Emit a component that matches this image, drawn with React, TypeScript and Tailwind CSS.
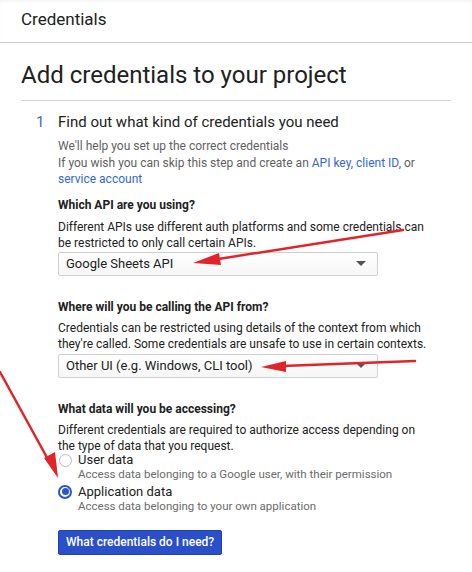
import { useState } from "react";

const Select = ({ value }: { value: string }) => {
  return (
    <div className="flex items-center justify-between w-[320px] h-[24px] px-[7px] border border-[#d0d0d0] rounded-[2px] bg-gradient-to-b from-white to-[#f6f6f6] text-[13px] text-[#212121]">
      <span>{value}</span>
      <svg width="10" height="5" viewBox="0 0 10 5" className="mr-[4px]">
        <path d="M0 0 L10 0 L5 5 Z" fill="#555" />
      </svg>
    </div>
  );
};

const Radio = ({ checked }: { checked: boolean }) => {
  return checked ? (
    <span className="flex items-center justify-center w-[14px] h-[14px] rounded-full border-2 border-[#2a56c6]">
      <span className="block w-[7px] h-[7px] rounded-full bg-[#2a56c6]" />
    </span>
  ) : (
    <span className="block w-[13px] h-[13px] rounded-full border border-[#bdbdbd] bg-white" />
  );
};

const App = () => {
  const [data, setData] = useState("app");

  return (
    <div className="relative w-[472px] h-[572px] bg-white font-['Roboto',sans-serif] text-[#212121] overflow-hidden">
      <div className="h-[43px] border-b border-[#cfcfcf] px-[21px] pt-[7px] text-[17px] shadow-[inset_0_2px_2px_rgba(0,0,0,0.04)]">
        Credentials
      </div>

      <div className="mx-[21px] border-b border-[#d4d4d4] pt-[17px] pb-[10px]">
        <h1 className="text-[24px] leading-[30px]">Add credentials to your project</h1>
      </div>

      <div className="flex pl-[36px] pt-[11px]">
        <span className="w-[22px] text-[15px] leading-[20px] text-[#3b6bd6]">1</span>
        <div className="flex-1">
          <h2 className="text-[15px] leading-[20px]">Find out what kind of credentials you need</h2>

          <p className="mt-[6px] text-[12px] leading-[16.5px] text-[#5f5f5f]">
            We'll help you set up the correct credentials
            <br />
            If you wish you can skip this step and create an{" "}
            <a className="text-[#3367d6]">API key</a>,{" "}
            <a className="text-[#3367d6]">client ID</a>, or
            <br />
            <a className="text-[#3367d6]">service account</a>
          </p>

          <h3 className="mt-[9px] text-[12px] leading-[16px] font-bold">Which API are you using?</h3>
          <p className="mt-[6px] text-[12px] leading-[16px] w-[370px]">
            Different APIs use different auth platforms and some credentials can be restricted to only call certain APIs.
          </p>
          <div className="mt-[1px]">
            <Select value="Google Sheets API" />
          </div>

          <h3 className="mt-[23px] text-[12px] leading-[16px] font-bold">Where will you be calling the API from?</h3>
          <p className="mt-[5px] text-[12px] leading-[16px] w-[375px]">
            Credentials can be restricted using details of the context from which they're called. Some credentials are unsafe to use in certain contexts.
          </p>
          <div className="mt-[2px]">
            <Select value="Other UI (e.g. Windows, CLI tool)" />
          </div>

          <h3 className="mt-[23px] text-[12px] leading-[16px] font-bold">What data will you be accessing?</h3>
          <p className="mt-[5px] text-[12px] leading-[16px] w-[370px]">
            Different credentials are required to authorize access depending on the type of data that you request.
          </p>

          <div className="flex flex-col">
            <label className="flex items-start gap-[6px] cursor-pointer" onClick={() => setData("user")}>
              <span className="w-[14px] flex justify-center"><Radio checked={data === "user"} /></span>
              <span>
                <span className="block text-[13px] leading-[12px]">User data</span>
                <span className="block mt-[1px] text-[11.5px] leading-[15px] text-[#6b6b6b]">
                  Access data belonging to a Google user, with their permission
                </span>
              </span>
            </label>
            <label className="flex items-start gap-[6px] mt-[3px] cursor-pointer" onClick={() => setData("app")}>
              <span className="w-[14px] flex justify-center"><Radio checked={data === "app"} /></span>
              <span>
                <span className="block text-[13px] leading-[14px]">Application data</span>
                <span className="block text-[11.5px] leading-[15px] text-[#6b6b6b]">
                  Access data belonging to your own application
                </span>
              </span>
            </label>
          </div>

          <button className="mt-[16px] h-[25px] px-[7px] rounded-[2px] border border-[#1f43b5] bg-[#2a4fc9] text-white text-[12px] font-medium">
            What credentials do I need?
          </button>
        </div>
      </div>

      {/* red annotation arrows */}
      <svg className="absolute inset-0 pointer-events-none" width="472" height="572">
        <g stroke="#e0242a" strokeWidth="2.5" strokeLinecap="round" fill="#e0242a">
          <line x1="403" y1="230" x2="212" y2="260" />
          <path d="M193 263 L219 253 L221 265 Z" stroke="none" />
          <line x1="415" y1="361" x2="282" y2="366" />
          <path d="M261 367 L286 361 L286 372 Z" stroke="none" />
          <line x1="0" y1="372" x2="50" y2="463" />
          <path d="M58 478 L44 458 L55 452 Z" stroke="none" />
        </g>
      </svg>
    </div>
  );
};

export default App;
